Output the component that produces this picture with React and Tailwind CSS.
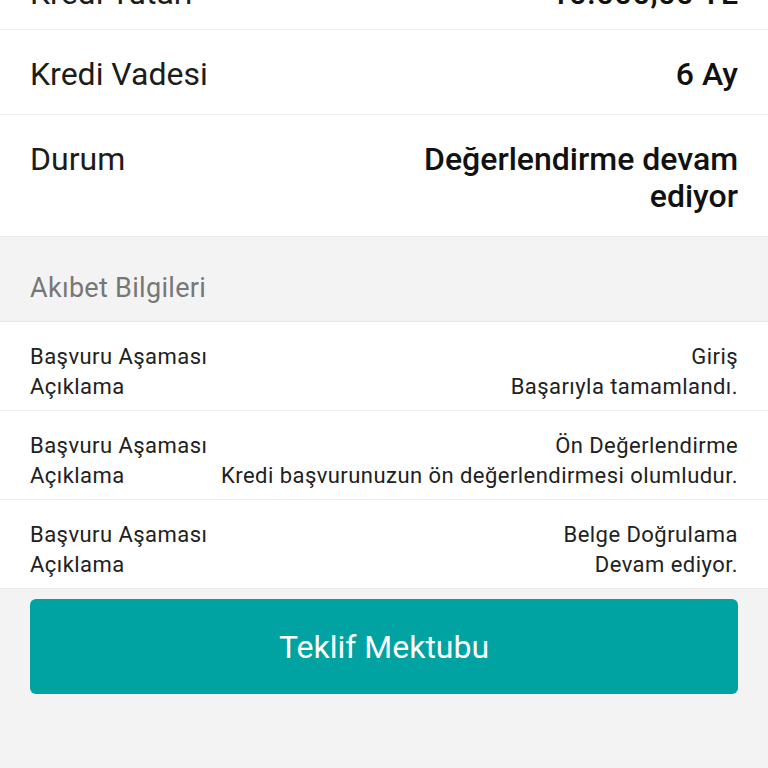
import React from 'react';

const font = { fontFamily: 'Roboto, "Noto Sans", sans-serif' };

const summary = [
  { label: 'Kredi Tutarı', value: '10.000,00 TL' },
  { label: 'Kredi Vadesi', value: '6 Ay' },
  { label: 'Durum', value: 'Değerlendirme devam ediyor' },
];

const stages = [
  { stage: 'Giriş', note: 'Başarıyla tamamlandı.' },
  { stage: 'Ön Değerlendirme', note: 'Kredi başvurunuzun ön değerlendirmesi olumludur.' },
  { stage: 'Belge Doğrulama', note: 'Devam ediyor.' },
];

const SummaryRow = ({ label, value, first }) => (
  <div
    className={`flex justify-between gap-6 bg-white px-[30px] pt-[26px] border-b border-[#ececec] ${
      first ? 'mt-[-51px] pb-[17px]' : 'pb-[21px]'
    }`}
  >
    <span className="text-[32px] leading-[36px] text-[#1c1c1c] shrink-0">{label}</span>
    <span className="text-[32px] leading-[37px] font-medium text-[#111] text-right max-w-[340px]">
      {value}
    </span>
  </div>
);

const StageRow = ({ stage, note }) => (
  <div className="bg-white px-[30px] pt-[20px] pb-[8px] border-b border-[#ececec] text-[22px] leading-[30px] tracking-[0.45px] text-[#212121]">
    <div className="flex justify-between">
      <span>Başvuru Aşaması</span>
      <span>{stage}</span>
    </div>
    <div className="flex justify-between">
      <span>Açıklama</span>
      <span>{note}</span>
    </div>
  </div>
);

export default function App() {
  return (
    <div className="w-[768px] h-[768px] overflow-hidden bg-[#f3f3f3]" style={font}>
      {summary.map((row, i) => (
        <SummaryRow key={row.label} {...row} first={i === 0} />
      ))}

      {/* Akıbet header */}
      <div className="px-[30px] pt-[36px] pb-[17px] border-b border-[#e6e6e6]">
        <span className="text-[27px] leading-[30px] tracking-[0.3px] text-[#777]">Akıbet Bilgileri</span>
      </div>

      {stages.map((s) => (
        <StageRow key={s.stage} {...s} />
      ))}

      <div className="px-[30px] pt-[10px]">
        <button className="w-full h-[95px] rounded-[6px] bg-[#00a3a1] text-white text-[32px] font-normal">
          Teklif Mektubu
        </button>
      </div>
    </div>
  );
}
